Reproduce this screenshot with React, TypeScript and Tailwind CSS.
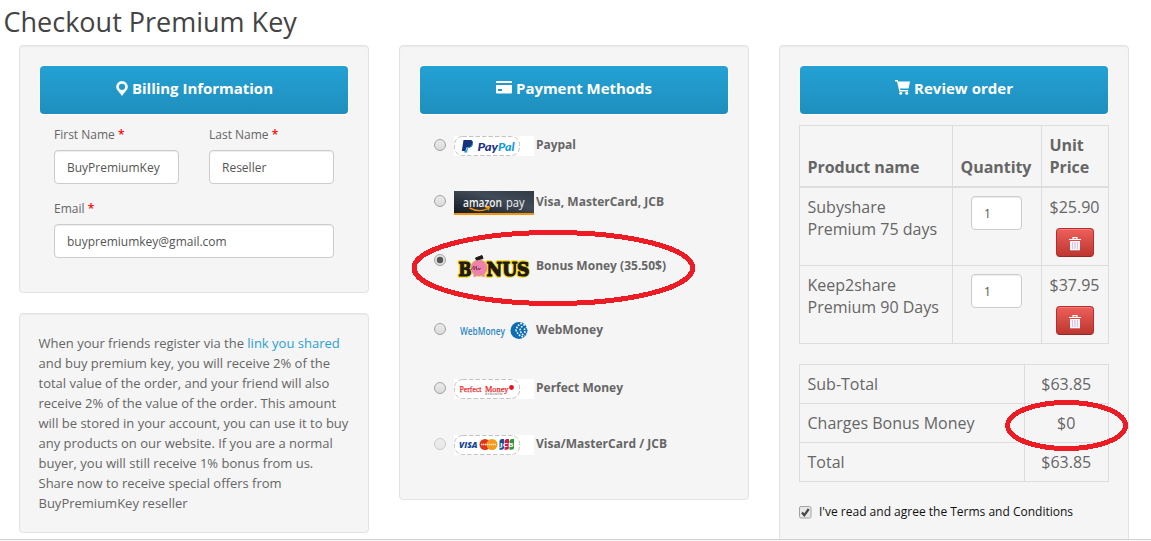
import type { ReactNode } from "react";

function Panel({ className = "", children }: { className?: string; children: ReactNode }) {
  return (
    <section
      className={`w-[350px] rounded border border-[#e3e3e3] bg-[#f5f5f5] shadow-[inset_0_1px_1px_rgba(0,0,0,0.05)] ${className}`}
    >
      {children}
    </section>
  );
}

function PanelTitle({ icon, label, width }: { icon: ReactNode; label: string; width: number }) {
  return (
    <div className="flex h-12 items-center justify-center rounded bg-linear-to-b from-[#24a1d4] to-[#1e8fbd] pb-[5px] shadow-[0_1px_0_#fff,0_0_0_1px_rgba(255,255,255,0.6)]">
      {icon}
      <svg width={width} height="24" className="overflow-visible">
        <text x="0" y="18" textLength={width} fontSize="15" fontWeight="700" fill="#fff">
          {label}
        </text>
      </svg>
    </div>
  );
}

const PinIcon = (
  <svg className="mt-px mr-1 ml-px" width="12" height="15" viewBox="0 0 12 15" fill="#fff" fillRule="evenodd">
    <path d="M6 0a5.800 5.800 0 0 0-5.800 5.800C.2 9.200 4 11.500 6 15c2-3.500 5.800-5.800 5.800-9.200A5.800 5.800 0 0 0 6 0Zm0 2.700a3.100 3.100 0 1 1 0 6.200 3.100 3.100 0 0 1 0-6.200Z" />
  </svg>
);

const CardIcon = (
  <svg className="mr-1" width="16" height="13" viewBox="0 0 16 13" fill="#fff" fillRule="evenodd">
    <path d="M1 0h14a1 1 0 0 1 1 1v1H0V1a1 1 0 0 1 1-1ZM0 4h16v7.500a1 1 0 0 1-1 1H1a1 1 0 0 1-1-1ZM2 8v2h4V8Z" />
  </svg>
);

const CartIcon = (
  <svg className="mr-1" width="15" height="15" viewBox="0 0 15 15" fill="#fff">
    <path d="M0 0h2.700l.6 1.500H15L13.600 8.500H5l.4 1.500h7.800v1.500H4.300L2 1.500H0Z" />
    <circle cx="5.700" cy="13.300" r="1.500" />
    <circle cx="11.700" cy="13.300" r="1.500" />
  </svg>
);

function TrashIcon() {
  return (
    <svg width="12" height="14" viewBox="0 0 12 14">
      <path d="M4 2V.7h4V2M0 2.500h12" fill="none" stroke="#fff" strokeWidth="1.200" />
      <path d="M1 4h10v9.300H1Z" fill="#fff" />
      <path d="M3.500 5v7M6 5v7M8.500 5v7" stroke="#dcc3e4" strokeWidth="1.400" />
    </svg>
  );
}

function Field({ label, value, className }: { label: string; value: string; className: string }) {
  return (
    <div className={className}>
      <div className="h-5 text-[12px] leading-5 text-[#666]">
        {label} <span className="font-semibold text-[#f00]">*</span>
      </div>
      <div className="mt-[5px] h-[34px] rounded border border-[#ccc] bg-white px-3 text-[12px] leading-[33px] text-[#555] shadow-[inset_0_1px_1px_rgba(0,0,0,0.075)]">
        {value}
      </div>
    </div>
  );
}

function Radio({ checked, faded, className }: { checked?: boolean; faded?: boolean; className: string }) {
  return (
    <svg width="13" height="13" viewBox="0 0 13 13" className={`${className} ${faded ? "opacity-50" : ""}`}>
      <defs>
        <linearGradient id="radioFill" x1="0" y1="0" x2="0" y2="1">
          <stop offset="0" stopColor="#ebebeb" />
          <stop offset="1" stopColor="#dadada" />
        </linearGradient>
      </defs>
      <circle cx="6" cy="6" r="5.500" fill="url(#radioFill)" stroke="#a3a3a3" />
      {checked && <circle cx="6" cy="6" r="3.200" fill="#555" />}
    </svg>
  );
}

function Plate() {
  return (
    <>
      <rect width="80" height="20" fill="#fff" />
      <rect x=".5" y=".5" width="65" height="19" rx="8" fill="none" stroke="#c4c4c4" strokeDasharray="4.500 2" />
    </>
  );
}

function PaypalLogo() {
  return (
    <svg width="80" height="20">
      <Plate />
      <path d="M9.500 4h6.500c2.500 0 3.500 2 2.500 4.500s-2.500 3-4.500 3h-1.700L11.500 15H7.800Z" fill="#173380" />
      <path d="M18.500 6.500c1.200 3-1 5.500-4.500 5.500l-1 4.500h-2.800l.3-1.500h1.500l.8-3.500c3 0 5-1 5.700-5Z" fill="#169bd7" />
      <g fontFamily="Lato" fontSize="12" fontWeight="900" fontStyle="italic">
        <text x="23.500" y="15" textLength="20.500" lengthAdjust="spacingAndGlyphs" fill="#1b3280">Pay</text>
        <text x="44" y="15" textLength="16.500" lengthAdjust="spacingAndGlyphs" fill="#169bd7">Pal</text>
      </g>
    </svg>
  );
}

function AmazonLogo() {
  return (
    <svg width="80" height="24">
      <defs>
        <linearGradient id="amazonFill" x1="0" y1="1" x2="1" y2="0">
          <stop offset="0" stopColor="#141a23" />
          <stop offset=".6" stopColor="#414b58" />
          <stop offset="1" stopColor="#303a46" />
        </linearGradient>
      </defs>
      <rect width="80" height="22" fill="url(#amazonFill)" />
      <rect y="22" width="80" height="2" fill="#f59300" />
      <g fontFamily="Open Sans" fontSize="12" fill="#f2f2f2">
        <text x="9" y="15.500" fontWeight="600" textLength="39" lengthAdjust="spacingAndGlyphs">amazon</text>
        <text x="52" y="15.500" textLength="18.500" lengthAdjust="spacingAndGlyphs">pay</text>
      </g>
      <path d="M15.500 17c6 3 13 3.300 18.500.5M31.500 16.300l4-.3-1.500 3.200" fill="none" stroke="#f59300" strokeWidth="1.400" />
    </svg>
  );
}

function BonusLetters() {
  return (
    <>
      <text x="4.500" y="20.500" textLength="13" lengthAdjust="spacingAndGlyphs">B</text>
      <text x="32.500" y="20.500" textLength="43" lengthAdjust="spacingAndGlyphs">NUS</text>
    </>
  );
}

function BonusLogo() {
  return (
    <svg width="80" height="24" className="overflow-visible">
      <g fontFamily="DejaVu Serif" fontSize="18.500" fontWeight="700" fill="#1d1a17" strokeLinejoin="round">
        <g stroke="#f2d51b" strokeWidth="3.400">
          <BonusLetters />
        </g>
        <g stroke="#1d1a17" strokeWidth="1.200">
          <BonusLetters />
        </g>
      </g>
      <circle cx="25" cy="13" r="8.800" fill="#e5c93a" />
      <circle cx="25" cy="13" r="7.900" fill="#ed82ae" />
      <path d="M21.500 20l-1.500 1.800M29 20l1 1.800" stroke="#ed82ae" strokeWidth="2.400" />
      <path d="M21.500 3l6.500-2.500 1 3-6.500 1.500Z" fill="#1d1a17" stroke="#1d1a17" />
      <path d="M17 15l3-4 0 4 2.500-4 0 4 2.500-2 0 2 2-2" fill="none" stroke="#70354c" strokeWidth=".8" />
    </svg>
  );
}

function WebMoneyLogo() {
  return (
    <svg width="80" height="22">
      <text x="6" y="15.500" textLength="45" lengthAdjust="spacingAndGlyphs" fontFamily="Open Sans" fontSize="10" fontWeight="600" fill="#2d88c3">
        WebMoney
      </text>
      <circle cx="65" cy="11.500" r="8.500" fill="#0c6db3" />
      <g fill="none" stroke="#e9f3f9" strokeWidth="1.600" strokeDasharray="1.800 1.200">
        <path d="M68 4q-5 2.500-6 7q2 5.500 7 7" />
        <path d="M71 5.500q-4 2-5 5.500q1 4 5 6" />
        <path d="M74 8q-3 1-4 3q1 3 3 4" />
      </g>
    </svg>
  );
}

function PerfectMoneyLogo() {
  return (
    <svg width="80" height="20">
      <Plate />
      <g fontFamily="Liberation Serif" fontSize="8.500" fill="#e8282c" stroke="#e8282c" strokeWidth=".25">
        <text x="5.500" y="12.700" textLength="22" lengthAdjust="spacingAndGlyphs">Perfect</text>
        <text x="31" y="12.700" textLength="23.500" lengthAdjust="spacingAndGlyphs">Money</text>
      </g>
      <circle cx="57.500" cy="8.500" r="2.400" fill="#e8121d" />
      <path d="M31 15h18" stroke="#888" strokeWidth="1.200" strokeDasharray="2 .5" />
    </svg>
  );
}

function CardsLogo() {
  return (
    <svg width="80" height="20">
      <Plate />
      <text x="5" y="12.500" textLength="18.500" lengthAdjust="spacingAndGlyphs" fontFamily="Open Sans" fontSize="9" fontWeight="800" fontStyle="italic" fill="#12459a">
        VISA
      </text>
      <circle cx="31" cy="9.500" r="5.500" fill="#e0351b" />
      <circle cx="38" cy="9.500" r="5.500" fill="#f39c18" />
      <path d="M27 9.500h15" stroke="#fbe3cf" strokeWidth="1.600" strokeDasharray="1.500 .5" />
      <path d="M45.500 14.700V6.500q0-2.500 2.500-2.500h2v8.200q0 2.500-2.500 2.500Z" fill="#15519f" />
      <path d="M50.500 14.700V6.500q0-2.500 2.500-2.500h2v8.200q0 2.500-2.500 2.500Z" fill="#d41b43" />
      <path d="M55.500 14.700V6.500q0-2.500 2.500-2.500h2v8.200q0 2.500-2.500 2.500Z" fill="#249a3c" />
      <text x="46" y="11.500" textLength="13.500" lengthAdjust="spacingAndGlyphs" fontFamily="Open Sans" fontSize="5.500" fontWeight="700" fill="#fff">
        JCB
      </text>
    </svg>
  );
}

const methods = [
  { label: "Paypal", width: 40, logo: <PaypalLogo />, row: "h-[55px]", radio: "mt-[3px]", img: "", text: "mt-[-1px]" },
  { label: "Visa, MasterCard, JCB", width: 128, logo: <AmazonLogo />, row: "h-14", radio: "mt-1", img: "", text: "mt-px" },
  { label: "Bonus Money (35.50$)", width: 130, logo: <BonusLogo />, row: "h-[72px]", radio: "mt-[7px]", img: "mt-2", text: "mt-[9px]", checked: true },
  { label: "WebMoney", width: 67, logo: <WebMoneyLogo />, row: "h-[60px]", radio: "mt-1", img: "", text: "mt-px" },
  { label: "Perfect Money", width: 87, logo: <PerfectMoneyLogo />, row: "h-14", radio: "mt-[3px]", img: "", text: "mt-[-1px]" },
  { label: "Visa/MasterCard / JCB", width: 131, logo: <CardsLogo />, row: "h-5", radio: "mt-[3px]", img: "", text: "mt-[-1px]", faded: true },
];

const products = [
  { lines: ["Subyshare", "Premium 75 days"], price: "$25.90" },
  { lines: ["Keep2share", "Premium 90 Days"], price: "$37.95" },
];

const totals = [
  ["Sub-Total", "$63.85"],
  ["Charges Bonus Money", "$0"],
  ["Total", "$63.85"],
];

const offer = [
  "and buy premium key, you will receive 2% of the",
  "total value of the order, and your friend will also",
  "receive 2% of the value of the order. This amount",
  "will be stored in your account, you can use it to buy",
  "any products on our website. If you are a normal",
  "buyer, you will still receive 1% bonus from us.",
  "Share now to receive special offers from",
  "BuyPremiumKey reseller",
];

const cell = "border-r border-b border-[#ddd] py-2 pr-2 pl-[7.5px] align-top";

export default function App() {
  return (
    <div className="relative h-[541px] w-[1151px] overflow-hidden bg-white font-['Open_Sans',sans-serif] text-[#666]">
      <div className="h-[539px] overflow-hidden">
        <h1 className="h-[45px] pl-[3.5px] text-[27px] leading-[43px] text-[#444]">Checkout Premium Key</h1>
        <main className="flex items-start gap-[30px] pl-[19px]">
          <div className="flex flex-col gap-5">
            <Panel className="h-[248px] p-5">
              <PanelTitle icon={PinIcon} label="Billing Information" width={141} />
              <div className="flex gap-[30px] px-[14px] pt-[11px]">
                <Field label="First Name" value="BuyPremiumKey" className="w-[125px]" />
                <Field label="Last Name" value="Reseller" className="w-[125px]" />
              </div>
              <Field label="Email" value="buypremiumkey@gmail.com" className="mx-[14px] mt-[15px]" />
            </Panel>
            <Panel className="h-[220px] py-[19px] pl-[18.5px] text-[13px] leading-5 whitespace-nowrap">
              <p>
                When your friends register via the <a className="text-[#2a9fd6]">link you shared</a>
              </p>
              {offer.map((line) => (
                <p key={line}>{line}</p>
              ))}
            </Panel>
          </div>

          <Panel className="h-[455px] p-5">
            <PanelTitle icon={<span className="-ml-px">{CardIcon}</span>} label="Payment Methods" width={136} />
            <div className="pt-[22px] pl-[14px]">
              {methods.map((m) => (
                <div key={m.label} className={`flex items-start ${m.row}`}>
                  <Radio checked={m.checked} faded={m.faded} className={m.radio} />
                  <div className={`ml-[7px] w-20 ${m.img}`}>{m.logo}</div>
                  <svg width={m.width} height="20" className={`ml-[2px] overflow-visible ${m.text}`}>
                    <text x="0" y="14" textLength={m.width} fontSize="12" fontWeight="700" fill="#666">
                      {m.label}
                    </text>
                  </svg>
                </div>
              ))}
            </div>
          </Panel>

          <Panel className="h-[520px] p-5">
            <PanelTitle icon={<span className="-ml-px">{CartIcon}</span>} label="Review order" width={99} />
            <table className="-mx-px mt-[11px] w-[310px] table-fixed border-separate border-spacing-0 border-t border-l border-[#ddd] text-left text-[16px] leading-[22px]">
              <colgroup>
                <col className="w-[153px]" />
                <col className="w-[89px]" />
                <col className="w-[67px]" />
              </colgroup>
              <thead>
                <tr className="h-[62px]">
                  {["Product name", "Quantity", "Unit Price"].map((h) => (
                    <th key={h} className="border-r border-b-2 border-[#ddd] py-2 pr-0 pl-[7.5px] align-bottom font-bold tracking-[-0.05px]">
                      {h}
                    </th>
                  ))}
                </tr>
              </thead>
              <tbody>
                {products.map((p) => (
                  <tr key={p.price} className="h-[78px]">
                    <td className={`${cell} whitespace-nowrap`}>
                      {p.lines[0]}
                      <br />
                      {p.lines[1]}
                    </td>
                    <td className={cell}>
                      <div className="ml-[10.5px] h-[34px] w-[51px] rounded border border-[#ccc] bg-white pl-3 text-[12px] leading-[33px] text-[#555] shadow-[inset_0_1px_1px_rgba(0,0,0,0.075)]">
                        1
                      </div>
                    </td>
                    <td className={cell}>
                      {p.price}
                      <button className="mt-[10px] ml-[6.5px] flex h-[29px] w-[38px] items-center justify-center rounded border border-[#b92c28] border-b-[#942a25] bg-linear-to-b from-[#ee5f5b] to-[#bd362f] pt-[2px] shadow-[inset_0_1px_0_rgba(255,255,255,0.2)]">
                        <TrashIcon />
                      </button>
                    </td>
                  </tr>
                ))}
              </tbody>
            </table>
            <table className="-mx-px mt-5 w-[310px] table-fixed border-separate border-spacing-0 border-t border-l border-[#ddd] text-[16px] leading-[22px]">
              <colgroup>
                <col className="w-[225px]" />
                <col className="w-[84px]" />
              </colgroup>
              <tbody>
                {totals.map(([name, value]) => (
                  <tr key={name} className="h-[39px]">
                    <td className={cell}>{name}</td>
                    <td className={`${cell} text-center`}>{value}</td>
                  </tr>
                ))}
              </tbody>
            </table>
            <div className="-ml-px mt-5 flex items-center">
              <svg width="13" height="13" className="mt-px">
                <rect x=".5" y=".5" width="11.500" height="11.500" rx="1.500" fill="#e8e8e8" stroke="#a3a3a3" />
                <path d="M3 6.500l2.300 2.800L9.700 3" fill="none" stroke="#444" strokeWidth="2.200" />
              </svg>
              <svg width="254" height="20" className="ml-[6.5px] overflow-visible">
                <text x="0" y="14" textLength="254" fontSize="12" fill="#111">
                  I've read and agree the Terms and Conditions
                </text>
              </svg>
            </div>
          </Panel>
        </main>
      </div>
      <div className="h-[2px] border-t border-[#d2d2d2] bg-[#f7f7f7]" />
      <svg className="pointer-events-none absolute inset-0" width="1151" height="541" fill="none" stroke="#ed1c24" strokeWidth="5" shapeRendering="crispEdges">
        <ellipse cx="553.300" cy="268" rx="139.300" ry="35.500" />
        <ellipse cx="1066.500" cy="425.500" rx="59" ry="23" />
      </svg>
    </div>
  );
}
